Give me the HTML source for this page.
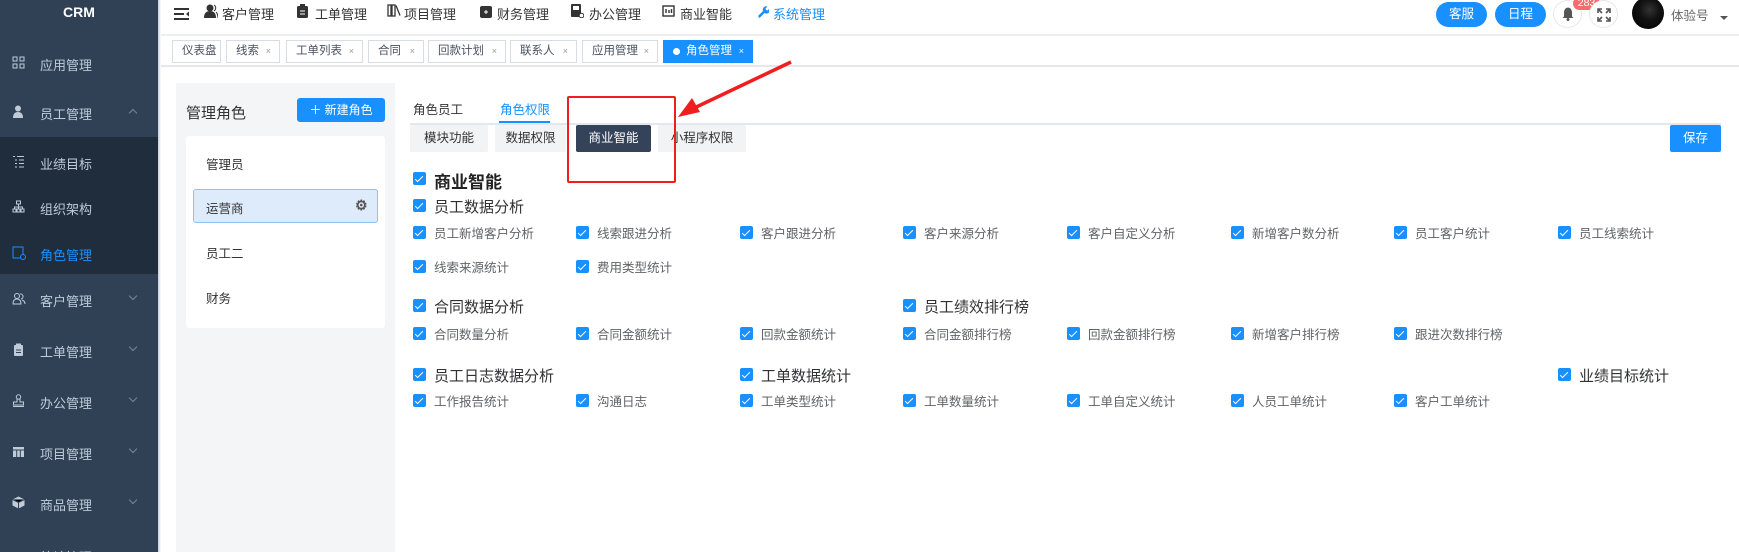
<!DOCTYPE html>
<html><head><meta charset="utf-8"><style>
*{margin:0;padding:0;box-sizing:border-box}
body{width:1739px;height:552px;overflow:hidden;background:#fff;font-family:"Liberation Sans","Noto Sans CJK SC",sans-serif;font-size:13px;color:#333;position:relative}
.a{position:absolute;white-space:nowrap}
#side{position:absolute;left:0;top:0;width:158px;height:552px;background:#304156;overflow:hidden}
.mi{position:absolute;left:0;width:158px;color:#bfcbd9;font-size:13px}
.mi .t{position:absolute;left:40px}
.mi .ic{position:absolute;left:12px;top:1px;width:13px;height:13px;color:#bfcbd9;font-size:12px}
.mi .ch{position:absolute;left:130px;width:6px;height:6px;border-right:1px solid #7a8696;border-bottom:1px solid #7a8696;transform:rotate(45deg)}
.nav{position:absolute;top:4px;font-size:13px;color:#333}
.tag{position:absolute;top:40px;height:23px;border:1px solid #d8dce5;background:#fff;font-size:11.5px;color:#495060;line-height:21px;padding-left:9px}
.tag .x{position:absolute;right:8px;font-size:9px;color:#999}
.cb{position:absolute;width:13px;height:13px;background:#1890ff;border-radius:2px;margin-top:2px}
.cb:after{content:"";position:absolute;left:4px;top:1.5px;width:3px;height:7px;border-right:1.5px solid #fff;border-bottom:1.5px solid #fff;transform:rotate(45deg)}
.it{position:absolute;font-size:12.5px;color:#606266;white-space:nowrap;margin-top:-1px}
.hd{position:absolute;font-size:15px;color:#303133;white-space:nowrap}
.st{position:absolute;top:125px;height:27px;background:#f2f3f5;color:#333;font-size:12.5px;line-height:27px;text-align:center;border-radius:2px}
</style></head><body>
<div id="side">
 <div class="a" style="left:0;width:158px;text-align:center;top:4px;color:#fff;font-weight:bold;font-size:14px">CRM</div>
 <div class="mi" style="top:55px"><span class="ic" style="border:0"><svg width="13" height="13" viewBox="0 0 13 13" fill="none" stroke="#bfcbd9"><rect x="1" y="1" width="4" height="4"/><rect x="8" y="1" width="4" height="4"/><rect x="1" y="8" width="4" height="4"/><rect x="8" y="8" width="4" height="4"/></svg></span><span class="t">应用管理</span></div>
 <div class="mi" style="top:104px"><span class="ic"><svg width="13" height="13"><circle cx="6" cy="3.5" r="3" fill="#bfcbd9"/><path d="M1 13 Q1 7 6 7 Q11 7 11 13Z" fill="#bfcbd9"/></svg></span><span class="t">员工管理</span><span class="ch" style="top:6px;transform:rotate(225deg)"></span></div>
 <div style="position:absolute;left:0;top:137px;width:158px;height:137px;background:#1f2d3d"></div>
 <div class="mi" style="top:154px"><span class="ic"><svg width="13" height="13" stroke="#bfcbd9"><path d="M1 1.5h2M5 1.5h7M3 5h2M7 5h5M3 8.5h2M7 8.5h5M3 12h2M7 12h5"/></svg></span><span class="t">业绩目标</span></div>
 <div class="mi" style="top:199px"><span class="ic"><svg width="13" height="13" fill="none" stroke="#bfcbd9"><rect x="4.5" y="1" width="4" height="3"/><rect x="1" y="9" width="3" height="3"/><rect x="5" y="9" width="3" height="3"/><rect x="9" y="9" width="3" height="3"/><path d="M6.5 4v5M2.5 9V7h8v2"/></svg></span><span class="t">组织架构</span></div>
 <div class="mi" style="top:245px;color:#1890ff"><span class="ic"><svg width="14" height="14" fill="none" stroke="#1890ff"><rect x="1" y="1" width="10" height="11"/><circle cx="11" cy="11" r="2.5" fill="#1f2d3d"/></svg></span><span class="t">角色管理</span></div>
 <div class="mi" style="top:291px"><span class="ic"><svg width="14" height="13" fill="none" stroke="#bfcbd9"><circle cx="5" cy="4" r="2.5"/><path d="M1 12q0-5 4-5t4 5zM8 2a2.5 2.5 0 1 1 1 5M10 8q3 1 3 4"/></svg></span><span class="t">客户管理</span><span class="ch" style="top:2px"></span></div>
 <div class="mi" style="top:342px"><span class="ic"><svg width="13" height="13"><rect x="2" y="2" width="9" height="11" rx="1" fill="#bfcbd9"/><rect x="4" y="0.5" width="5" height="3" fill="#bfcbd9"/><path d="M4 7h5M4 9.5h5" stroke="#304156"/></svg></span><span class="t">工单管理</span><span class="ch" style="top:2px"></span></div>
 <div class="mi" style="top:393px"><span class="ic"><svg width="13" height="13" fill="none" stroke="#bfcbd9"><circle cx="6.5" cy="3" r="2.2"/><path d="M5 5v3H1.5v3h10V8H8V5M1 12.5h11"/></svg></span><span class="t">办公管理</span><span class="ch" style="top:2px"></span></div>
 <div class="mi" style="top:444px"><span class="ic"><svg width="13" height="13"><rect x="1" y="2" width="11" height="10" fill="#bfcbd9"/><path d="M1 5h11M4.7 5v7M8.3 5v7" stroke="#304156"/></svg></span><span class="t">项目管理</span><span class="ch" style="top:2px"></span></div>
 <div class="mi" style="top:495px"><span class="ic"><svg width="13" height="13"><path d="M6.5 0.5 12.5 3.5 12.5 9.5 6.5 12.5 0.5 9.5 0.5 3.5Z" fill="#bfcbd9"/><path d="M0.5 3.5 6.5 6.5 12.5 3.5M6.5 6.5v6" stroke="#304156"/></svg></span><span class="t">商品管理</span><span class="ch" style="top:2px"></span></div>
 <div class="mi" style="top:547px"><span class="t">统计管理</span></div>
</div>
<div style="position:absolute;left:158px;top:0;width:3px;height:552px;background:linear-gradient(90deg,#c9ced6,#fff)"></div>
<!-- header -->
<div class="a" style="left:174px;top:8px"><svg width="15" height="13"><path d="M0 1h15M0 6h10M0 11h15" stroke="#333" stroke-width="2"/><path d="M15 3.5v5l-3-2.5z" fill="#333"/></svg></div>
<div class="nav" style="left:204px;top:4px"><svg width="14" height="14"><circle cx="6" cy="4" r="3.5" fill="#333"/><path d="M0 14q0-7 6-7t6 7z" fill="#333"/><path d="M10 1a3.5 3.5 0 0 1 0 6M12 8q2 2 2 6" stroke="#333" fill="none"/></svg></div>
<div class="nav" style="left:222px">客户管理</div>
<div class="nav" style="left:297px;top:4px"><svg width="11" height="14"><rect x="0" y="2" width="11" height="12" rx="1.5" fill="#333"/><rect x="3" y="0" width="5" height="3" fill="#333"/><path d="M3 7h5M3 10h5" stroke="#fff"/></svg></div>
<div class="nav" style="left:315px">工单管理</div>
<div class="nav" style="left:387px;top:4px"><svg width="14" height="13" fill="none" stroke="#333" stroke-width="1.3"><rect x="1" y="1" width="3" height="11"/><rect x="5" y="1" width="3" height="11"/><path d="M9 1.5l4 10"/></svg></div>
<div class="nav" style="left:404px">项目管理</div>
<div class="nav" style="left:480px;top:5px"><svg width="12" height="13"><rect x="0" y="1" width="12" height="12" rx="2" fill="#333"/><path d="M4 7h4M6 5v4" stroke="#fff"/></svg></div>
<div class="nav" style="left:497px">财务管理</div>
<div class="nav" style="left:571px;top:4px"><svg width="13" height="14"><rect x="0" y="0" width="10" height="13" rx="1" fill="#333"/><rect x="2" y="2" width="6" height="4" fill="#fff"/><circle cx="10.5" cy="11.5" r="2.3" fill="#fff" stroke="#333"/></svg></div>
<div class="nav" style="left:589px">办公管理</div>
<div class="nav" style="left:662px;top:5px"><svg width="13" height="12" fill="none" stroke="#333" stroke-width="1.4"><rect x="1" y="1" width="11" height="10"/><path d="M4 4v4M7 5v3M9.5 4v4"/></svg></div>
<div class="nav" style="left:680px">商业智能</div>
<div class="nav" style="left:755px;top:4px"><svg width="14" height="14"><path d="M3 12 8 7a3.5 3.5 0 0 1 4.5-4.5L10.5 4.5 11 6l1.5.5 2-2A3.5 3.5 0 0 1 9.5 9L4.5 14z" fill="#1890ff"/></svg></div>
<div class="nav" style="left:773px;color:#1890ff">系统管理</div>
<div class="a" style="left:1436px;top:2px;width:51px;height:25px;border-radius:13px;background:#1890ff;color:#fff;text-align:center;line-height:25px;font-size:12.5px">客服</div>
<div class="a" style="left:1495px;top:2px;width:51px;height:25px;border-radius:13px;background:#1890ff;color:#fff;text-align:center;line-height:25px;font-size:12.5px">日程</div>
<div class="a" style="left:1553px;top:0px;width:29px;height:28px;border-radius:50%;border:1px solid #e4e7ed;background:#fff"><svg style="position:absolute;left:8px;top:6px" width="12" height="14"><path d="M6 0.5C3 1 2 3 2 6v3.5L0.5 11h11L10 9.5V6c0-3-1-5-4-5.5z" fill="#555"/><circle cx="6" cy="12.5" r="1.5" fill="#555"/></svg></div>
<div class="a" style="left:1573px;top:-3px;width:27px;height:13px;border-radius:7px;background:#f56c6c;color:#fff;font-size:10.5px;line-height:13px;text-align:center">283</div>
<div class="a" style="left:1589px;top:0px;width:29px;height:28px;border-radius:50%;border:1px solid #e4e7ed;background:#fff"><svg style="position:absolute;left:7px;top:7px" width="14" height="14" stroke="#555" stroke-width="1.6" fill="none"><path d="M9 1h4v4M13 1 9 5M5 13H1V9M1 13l4-4M1 5V1h4M1 1l4 4M13 9v4H9M13 13 9 9"/></svg></div>
<div class="a" style="left:1632px;top:-3px;width:32px;height:32px;border-radius:50%;background:radial-gradient(circle at 55% 40%,#333 0,#111 40%,#000 100%)"></div>
<div class="a" style="left:1671px;top:5px;font-size:12.5px;color:#666">体验号</div>
<div class="a" style="left:1720px;top:16px;width:0;height:0;border-left:4px solid transparent;border-right:4px solid transparent;border-top:4px solid #555"></div>
<div style="position:absolute;left:161px;top:34px;right:0;height:2px;background:#eceef2"></div>
<!-- tags -->
<div class="tag" style="left:172px;width:49px">仪表盘</div>
<div class="tag" style="left:226px;width:54px">线索<span class="x">×</span></div>
<div class="tag" style="left:286px;width:77px">工单列表<span class="x">×</span></div>
<div class="tag" style="left:368px;width:56px">合同<span class="x">×</span></div>
<div class="tag" style="left:428px;width:78px">回款计划<span class="x">×</span></div>
<div class="tag" style="left:510px;width:67px">联系人<span class="x">×</span></div>
<div class="tag" style="left:582px;width:76px">应用管理<span class="x">×</span></div>
<div class="tag" style="left:663px;width:90px;background:#1890ff;border-color:#1890ff;color:#fff;padding-left:22px"><span style="position:absolute;left:9px;top:7px;width:7px;height:7px;border-radius:50%;background:#fff"></span>角色管理<span class="x" style="color:#fff">×</span></div>
<div style="position:absolute;left:161px;top:65px;right:0;height:2px;background:#e4e7ed"></div>
<!-- left panel -->
<div style="position:absolute;left:176px;top:83px;width:219px;height:469px;background:#f4f5f7"></div>
<div class="a" style="left:186px;top:102px;font-size:15px;color:#333">管理角色</div>
<div class="a" style="left:297px;top:98px;width:88px;height:24px;background:#1890ff;border-radius:3px;color:#fff;font-size:12px;line-height:24px;text-align:center">＋ 新建角色</div>
<div style="position:absolute;left:186px;top:136px;width:199px;height:192px;background:#fff;border-radius:3px"></div>
<div class="a" style="left:206px;top:154px;font-size:12.5px">管理员</div>
<div style="position:absolute;left:193px;top:189px;width:185px;height:34px;background:#deebfb;border:1px solid #8cc1f7;border-radius:3px"></div>
<div class="a" style="left:206px;top:198px;font-size:12.5px">运营商</div>
<div class="a" style="left:355px;top:197px;font-size:14px;color:#555;font-weight:bold">⚙</div>
<div class="a" style="left:206px;top:243px;font-size:12.5px">员工二</div>
<div class="a" style="left:206px;top:288px;font-size:12.5px">财务</div>
<!-- right -->
<div class="a" style="left:413px;top:99px;font-size:12.5px">角色员工</div>
<div class="a" style="left:500px;top:99px;font-size:12.5px;color:#1890ff">角色权限</div>
<div style="position:absolute;left:410px;top:123px;width:1311px;height:2px;background:#e4e7ed"></div>
<div style="position:absolute;left:499px;top:121px;width:51px;height:2px;background:#1890ff"></div>
<div class="st" style="left:410px;width:78px">模块功能</div>
<div class="st" style="left:495px;width:71px">数据权限</div>
<div class="st" style="left:576px;width:75px;background:#34425a;color:#fff">商业智能</div>
<div class="st" style="left:658px;width:88px">小程序权限</div>
<div class="a" style="left:1670px;top:125px;width:51px;height:27px;background:#1890ff;color:#fff;font-size:12.5px;line-height:27px;text-align:center;border-radius:2px">保存</div>
<div style="position:absolute;left:567px;top:96px;width:109px;height:87px;border:2px solid #f01e1e;border-radius:2px"></div>
<svg class="a" style="left:670px;top:60px" width="130" height="65"><path d="M121 2 L20 50" stroke="#f01e1e" stroke-width="3.5"/><path d="M8 57 L22 38 L30 52Z" fill="#f01e1e"/></svg>

<div class="cb" style="left:413px;top:170px"></div><div class="a" style="left:434px;top:168px;font-size:17px;font-weight:bold;color:#222">商业智能</div>
<div class="cb" style="left:413px;top:197px"></div><div class="hd" style="left:434px;top:196px">员工数据分析</div>

<div class="cb" style="left:413px;top:224px"></div><div class="it" style="left:434px;top:224px">员工新增客户分析</div>
<div class="cb" style="left:576px;top:224px"></div><div class="it" style="left:597px;top:224px">线索跟进分析</div>
<div class="cb" style="left:740px;top:224px"></div><div class="it" style="left:761px;top:224px">客户跟进分析</div>
<div class="cb" style="left:903px;top:224px"></div><div class="it" style="left:924px;top:224px">客户来源分析</div>
<div class="cb" style="left:1067px;top:224px"></div><div class="it" style="left:1088px;top:224px">客户自定义分析</div>
<div class="cb" style="left:1231px;top:224px"></div><div class="it" style="left:1252px;top:224px">新增客户数分析</div>
<div class="cb" style="left:1394px;top:224px"></div><div class="it" style="left:1415px;top:224px">员工客户统计</div>
<div class="cb" style="left:1558px;top:224px"></div><div class="it" style="left:1579px;top:224px">员工线索统计</div>
<div class="cb" style="left:413px;top:258px"></div><div class="it" style="left:434px;top:258px">线索来源统计</div>
<div class="cb" style="left:576px;top:258px"></div><div class="it" style="left:597px;top:258px">费用类型统计</div>

<div class="cb" style="left:413px;top:297px"></div><div class="hd" style="left:434px;top:296px">合同数据分析</div>
<div class="cb" style="left:903px;top:297px"></div><div class="hd" style="left:924px;top:296px">员工绩效排行榜</div>
<div class="cb" style="left:413px;top:325px"></div><div class="it" style="left:434px;top:325px">合同数量分析</div>
<div class="cb" style="left:576px;top:325px"></div><div class="it" style="left:597px;top:325px">合同金额统计</div>
<div class="cb" style="left:740px;top:325px"></div><div class="it" style="left:761px;top:325px">回款金额统计</div>
<div class="cb" style="left:903px;top:325px"></div><div class="it" style="left:924px;top:325px">合同金额排行榜</div>
<div class="cb" style="left:1067px;top:325px"></div><div class="it" style="left:1088px;top:325px">回款金额排行榜</div>
<div class="cb" style="left:1231px;top:325px"></div><div class="it" style="left:1252px;top:325px">新增客户排行榜</div>
<div class="cb" style="left:1394px;top:325px"></div><div class="it" style="left:1415px;top:325px">跟进次数排行榜</div>

<div class="cb" style="left:413px;top:366px"></div><div class="hd" style="left:434px;top:365px">员工日志数据分析</div>
<div class="cb" style="left:740px;top:366px"></div><div class="hd" style="left:761px;top:365px">工单数据统计</div>
<div class="cb" style="left:1558px;top:366px"></div><div class="hd" style="left:1579px;top:365px">业绩目标统计</div>
<div class="cb" style="left:413px;top:392px"></div><div class="it" style="left:434px;top:392px">工作报告统计</div>
<div class="cb" style="left:576px;top:392px"></div><div class="it" style="left:597px;top:392px">沟通日志</div>
<div class="cb" style="left:740px;top:392px"></div><div class="it" style="left:761px;top:392px">工单类型统计</div>
<div class="cb" style="left:903px;top:392px"></div><div class="it" style="left:924px;top:392px">工单数量统计</div>
<div class="cb" style="left:1067px;top:392px"></div><div class="it" style="left:1088px;top:392px">工单自定义统计</div>
<div class="cb" style="left:1231px;top:392px"></div><div class="it" style="left:1252px;top:392px">人员工单统计</div>
<div class="cb" style="left:1394px;top:392px"></div><div class="it" style="left:1415px;top:392px">客户工单统计</div>
</body></html>
